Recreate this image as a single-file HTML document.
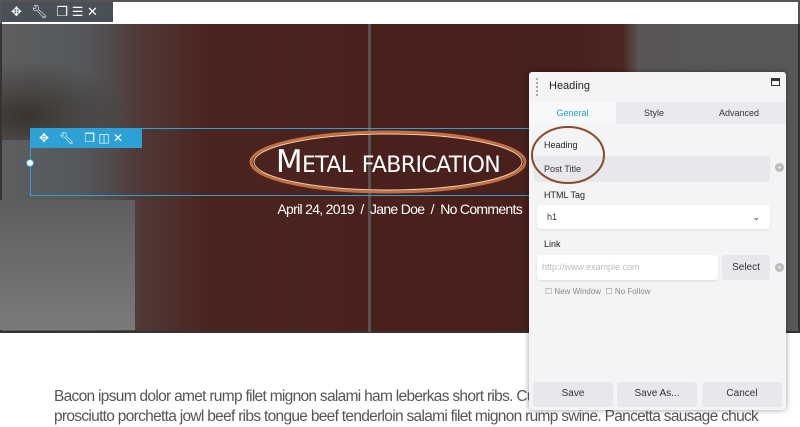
<!DOCTYPE html>
<html><head><style>
*{margin:0;padding:0;box-sizing:border-box}
body{width:800px;height:417px;overflow:hidden;background:#fff;font-family:"Liberation Sans",sans-serif;position:relative}
.abs{position:absolute}
.hero{left:0;top:24px;width:800px;height:309px;border:2px solid #333;border-top:none;background:linear-gradient(90deg,#5d5e60 0%,#55585a 10%,#504a4a 14%,#4f3a36 17%,#4b2420 26%,#4a201c 50%,#48201c 70%,#4a2622 78%,#5a5658 80%,#56585a 100%)}
.tb{background:#4a5058;color:#fff;font-size:13px;display:flex;gap:9px;align-items:center;padding-left:9px}
.panel{left:529px;top:72px;width:257px;height:338px;background:#f3f4f6;box-shadow:0 0 6px rgba(0,0,0,.4);border-radius:3px;font-size:9px;color:#333}
.lbl{font-size:9px;color:#222}
.inp{background:#fff;border-radius:3px;box-shadow:0 1px 2px rgba(0,0,0,.1)}
.btn{background:#e6e8eb;border-radius:3px;text-align:center;font-size:10px;line-height:23px;color:#333}
.cond{letter-spacing:-0.7px}
</style></head><body>
<div class="abs" style="left:0;top:0;width:800px;height:25px;border:2px solid #555;border-bottom:1px solid #333;background:#fff"></div>
<div class="abs tb" style="left:2px;top:2px;width:111px;height:20px">✥ <span>🔧︎</span> ❐ ☰ ✕</div>
<div class="abs hero"></div>
<div class="abs" style="left:0;top:60px;width:130px;height:80px;background:radial-gradient(ellipse at 20% 70%,#3a332e,transparent 70%)"></div>
<div class="abs" style="left:0;top:200px;width:135px;height:130px;background:linear-gradient(#5e5e60,#7a7a7c)"></div>
<div class="abs" style="left:368px;top:24px;width:3px;height:308px;background:#5a5052"></div>
<div class="abs" style="left:30px;top:128px;width:500px;height:68px;border:1px solid #2da1d6;border-right:none"></div>
<div class="abs tb" style="left:30px;top:128px;width:112px;height:20px;background:#2da1d6;gap:10px;font-size:12px">✥ <span>🔧︎</span> ❐ ◫ ✕</div>
<div class="abs" style="left:26px;top:159px;width:8px;height:8px;border-radius:50%;background:#fff;border:1px solid #2da1d6"></div>
<div class="abs" style="left:250px;top:141px;width:276px;height:42px;color:#fff;font-family:'DejaVu Sans',sans-serif;font-size:31px;text-align:center;line-height:42px;font-variant:small-caps;letter-spacing:-0.6px">Metal fabrication</div>
<svg class="abs" style="left:0;top:0" width="800" height="417"><ellipse cx="388" cy="162" rx="137" ry="30" fill="none" stroke="#c07040" stroke-width="3"/><ellipse cx="388" cy="162" rx="134" ry="28" fill="none" stroke="#f0d0b0" stroke-width="1"/></svg>
<div class="abs cond" style="left:240px;top:201px;width:282px;text-align:right;color:#fff;font-size:14px">April 24, 2019 &nbsp;/ &nbsp;Jane Doe &nbsp;/ &nbsp;No Comments</div>
<div class="abs cond" style="left:54px;top:387px;width:740px;white-space:nowrap;overflow:hidden;font-size:15.5px;color:#555;line-height:20px">Bacon ipsum dolor amet rump filet mignon salami ham leberkas short ribs. Cupim<br>prosciutto porchetta jowl beef ribs tongue beef tenderloin salami filet mignon rump swine. Pancetta sausage chuck</div>
<div class="panel abs">
<div class="abs" style="left:7px;top:6px;width:3px;height:18px;border-left:2px dotted #aaa"></div>
<div class="abs" style="left:20px;top:8px;font-size:11px;color:#222">Heading</div>
<div class="abs" style="left:242px;top:6px;width:9px;height:8px;border:1px solid #333;border-top-width:3px"></div>
<div class="abs" style="left:0;top:30px;width:257px;height:22px;background:#e8eaed"></div>
<div class="abs" style="left:0;top:30px;width:87px;height:22px;background:#f7f8f9;color:#2a9bc8;font-size:9px;text-align:center;line-height:22px">General</div>
<div class="abs" style="left:87px;top:30px;width:76px;text-align:center;line-height:22px">Style</div>
<div class="abs" style="left:170px;top:30px;width:80px;text-align:center;line-height:22px">Advanced</div>
<div class="abs lbl" style="left:15px;top:68px">Heading</div>
<div class="abs" style="left:5px;top:84px;width:236px;height:26px;background:#e6e8eb;border-radius:3px;line-height:26px;padding-left:10px">Post Title</div>
<div class="abs" style="left:246px;top:91px;width:9px;height:9px;border-radius:50%;background:#bbb;color:#fff;font-size:8px;line-height:9px;text-align:center">+</div>
<div class="abs lbl" style="left:15px;top:118px">HTML Tag</div>
<div class="abs inp" style="left:8px;top:133px;width:233px;height:24px;line-height:24px;padding-left:10px">h1<span style="position:absolute;right:10px">⌄</span></div>
<div class="abs lbl" style="left:15px;top:167px">Link</div>
<div class="abs inp" style="left:8px;top:183px;width:181px;height:25px;line-height:25px;padding-left:5px;color:#bbb">http://www.example.com</div>
<div class="abs btn" style="left:193px;top:183px;width:48px;height:25px;line-height:25px;font-size:10px">Select</div>
<div class="abs" style="left:246px;top:191px;width:9px;height:9px;border-radius:50%;background:#bbb;color:#fff;font-size:8px;line-height:9px;text-align:center">+</div>
<div class="abs" style="left:16px;top:215px;font-size:8px;color:#888">☐ New Window &nbsp;☐ No Follow</div>
<div class="abs btn" style="left:4px;top:310px;width:80px;height:25px">Save</div>
<div class="abs btn" style="left:88px;top:310px;width:80px;height:25px">Save As...</div>
<div class="abs btn" style="left:173px;top:310px;width:80px;height:25px">Cancel</div>
</div>
<svg class="abs" style="left:0;top:0" width="800" height="417"><ellipse cx="568" cy="155" rx="36" ry="28" fill="none" stroke="#8a4a2a" stroke-width="2"/></svg>
</body></html>
